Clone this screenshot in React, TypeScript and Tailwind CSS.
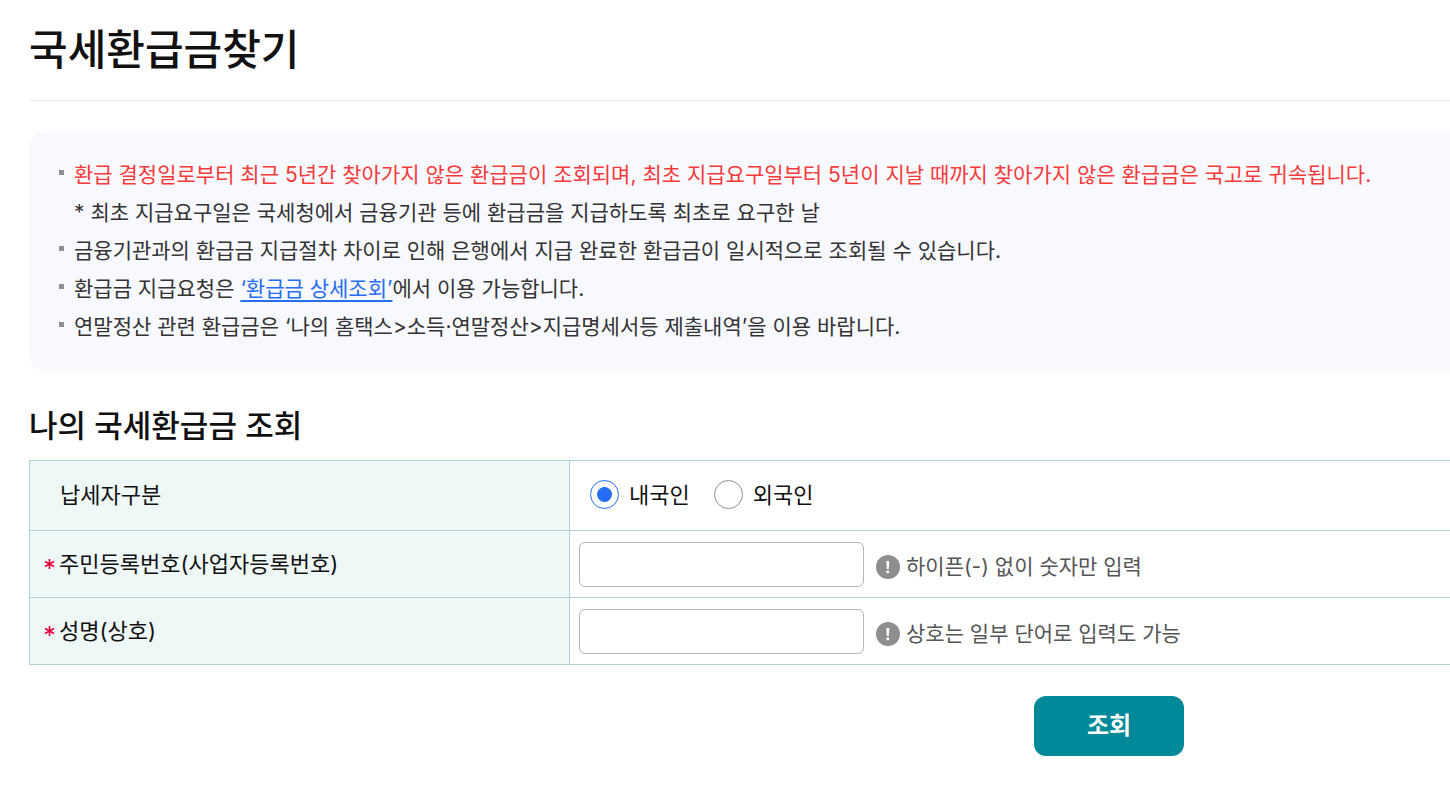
import { useState } from "react";
import type { ReactNode } from "react";

function NoticeItem({ children }: { children: ReactNode }) {
  return (
    <li className="flex gap-[10px]">
      <span className="mt-[14px] h-[5px] w-[5px] shrink-0 bg-[#8e8e8e]" />
      <div>{children}</div>
    </li>
  );
}

function Hint({ id, children }: { id: string; children: ReactNode }) {
  return (
    <p id={id} className="flex items-center gap-[6px] pt-[6px] text-[21px] leading-8 text-[#555555]">
      <svg viewBox="0 0 24 24" className="h-6 w-6 shrink-0" aria-hidden="true">
        <circle cx="12" cy="12" r="12" fill="#8e8e8e" />
        <path d="M10.3 6h3l-.5 8h-2z" fill="#fff" />
        <circle cx="11.8" cy="16.8" r="1.5" fill="#fff" />
      </svg>
      {children}
    </p>
  );
}

const types = [
  { value: "domestic", label: "내국인" },
  { value: "foreign", label: "외국인" },
];

const fields = [
  { id: "regNo", label: "주민등록번호(사업자등록번호)", hint: "하이픈(-) 없이 숫자만 입력" },
  { id: "name", label: "성명(상호)", hint: "상호는 일부 단어로 입력도 가능" },
];

export default function App() {
  const [type, setType] = useState("domestic");
  const [values, setValues] = useState<Record<string, string>>({});

  return (
    <main className="pl-[29px] font-[Inter,'Noto_Sans_CJK_KR',sans-serif] text-[#111111]">
      <h1 className="border-b border-[#e3e7ee] pt-5 pb-5 text-[42px] leading-[60px] font-medium">
        국세환급금찾기
      </h1>

      <ul className="mt-[30px] rounded-l-2xl bg-[#f8f9ff] pt-[25px] pr-4 pb-[25px] pl-[30px] text-[21px] leading-[38px] text-[#333333]">
        <NoticeItem>
          <p className="text-[#f73a3a]">
            환급 결정일로부터 최근 5년간 찾아가지 않은 환급금이 조회되며, 최초 지급요구일부터 5년이 지날 때까지 찾아가지 않은 환급금은 국고로 귀속됩니다.
          </p>
          <p>* 최초 지급요구일은 국세청에서 금융기관 등에 환급금을 지급하도록 최초로 요구한 날</p>
        </NoticeItem>
        <NoticeItem>
          금융기관과의 환급금 지급절차 차이로 인해 은행에서 지급 완료한 환급금이 일시적으로 조회될 수 있습니다.
        </NoticeItem>
        <NoticeItem>
          환급금 지급요청은{" "}
          <a href="#detail" className="text-[#256ef4] underline decoration-2 underline-offset-4">
            ‘환급금 상세조회’
          </a>
          에서 이용 가능합니다.
        </NoticeItem>
        <NoticeItem>
          연말정산 관련 환급금은 ‘나의 홈택스&gt;소득·연말정산&gt;지급명세서등 제출내역’을 이용 바랍니다.
        </NoticeItem>
      </ul>

      <form onSubmit={(e) => e.preventDefault()}>
        <h2 className="mt-8 mb-3 text-[31px] leading-[45px] font-medium">나의 국세환급금 조회</h2>
        <table className="w-full border-collapse border-y border-l border-[#b0d3d7] text-[22px] leading-8">
          <tbody>
            <tr className="h-[70px] border-b border-[#b0d3d7]">
              <th
                scope="row"
                className="w-[540px] border-r border-[#b0d3d7] bg-[#eef8f7] pb-[2px] pl-[30px] text-left font-normal"
              >
                납세자구분
              </th>
              <td className="pb-[2px] pl-5">
                <div className="flex gap-6">
                  {types.map((t) => (
                    <label key={t.value} className="flex items-center gap-[10px]">
                      <input
                        type="radio"
                        name="type"
                        value={t.value}
                        checked={type === t.value}
                        onChange={() => setType(t.value)}
                        className="grid h-[29px] w-[29px] appearance-none place-items-center rounded-full border border-[#8e8e8e] bg-white checked:border-[#256ef4] checked:before:h-[15px] checked:before:w-[15px] checked:before:rounded-full checked:before:bg-[#256ef4]"
                      />
                      {t.label}
                    </label>
                  ))}
                </div>
              </td>
            </tr>
            {fields.map((f) => (
              <tr key={f.id} className="h-[67px] border-b border-[#b0d3d7]">
                <th
                  scope="row"
                  className="border-r border-[#b0d3d7] bg-[#eef8f7] pl-[14px] text-left font-normal"
                >
                  <label htmlFor={f.id} className="flex items-center gap-1">
                    <svg viewBox="0 0 11 12" className="h-3 w-[11px]" aria-hidden="true">
                      <path
                        d="M5.5 1v10M1 3.5l9 5M10 3.5l-9 5"
                        stroke="#eb003b"
                        strokeWidth="1.6"
                      />
                    </svg>
                    {f.label}
                  </label>
                </th>
                <td className="pl-[9px]">
                  <div className="flex items-center gap-3">
                    <input
                      id={f.id}
                      type="text"
                      aria-describedby={`${f.id}-hint`}
                      value={values[f.id] ?? ""}
                      onChange={(e) => setValues({ ...values, [f.id]: e.target.value })}
                      className="h-[45px] w-[285px] rounded-md border border-[#b5b5b5] bg-white px-3"
                    />
                    <Hint id={`${f.id}-hint`}>{f.hint}</Hint>
                  </div>
                </td>
              </tr>
            ))}
          </tbody>
        </table>

        <div className="mt-[31px] flex justify-end pr-[266px]">
          <button
            type="submit"
            className="h-[60px] w-[150px] rounded-xl bg-[#008998] text-[24px] font-bold text-white"
          >
            조회
          </button>
        </div>
      </form>
    </main>
  );
}
